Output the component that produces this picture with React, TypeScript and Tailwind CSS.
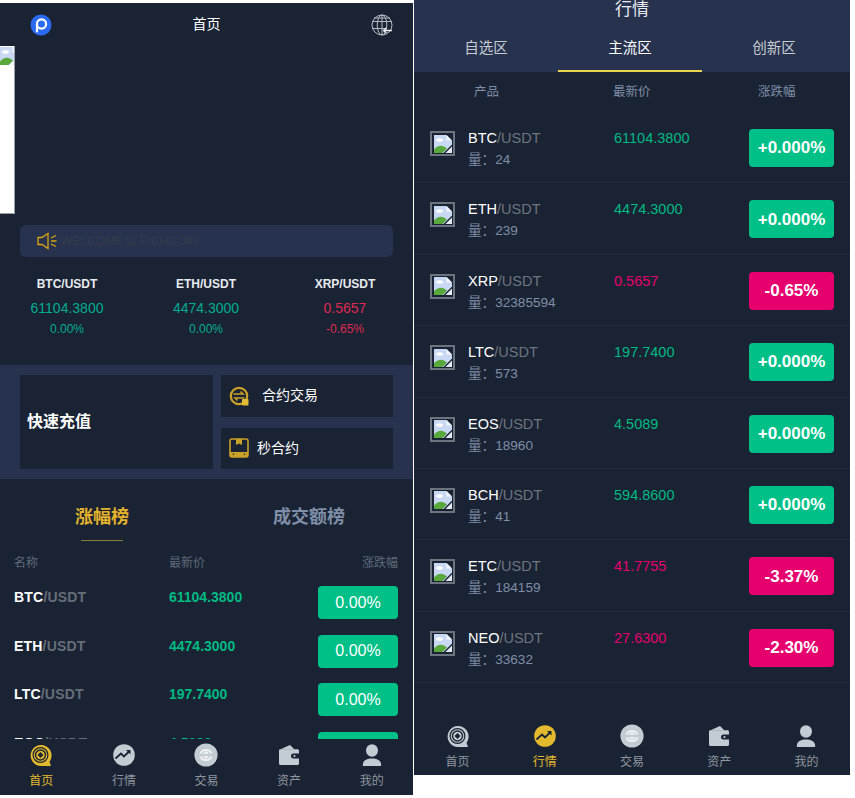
import React from 'react';

const FONT = "font-['Liberation_Sans','Noto_Sans_CJK_SC',sans-serif]";

const BrokenImage: React.FC = () => (
  <svg width="18" height="18" viewBox="0 0 18 18" className="shrink-0">
    <path d="M0 0H12.5L18 5.5V9.5L9.5 18H0Z" fill="#c9d8f3" />
    <path d="M12.5 0V5.5H18Z" fill="#f4f6fa" />
    <ellipse cx="5.5" cy="5" rx="3.4" ry="1.8" fill="#fff" />
    <path d="M0 18V14.5C3 10.5 7 10 10 11.5L13 13.5L8.5 18Z" fill="#58a83c" />
    <path d="M18 11.5V18H11.5Z" fill="#e6ebf3" />
  </svg>
);

const Logo: React.FC = () => (
  <svg width="22" height="22" viewBox="0 0 22 22">
    <circle cx="11" cy="11" r="10.5" fill="#2a6af0" />
    <circle cx="11.5" cy="10" r="4.6" fill="none" stroke="#fff" strokeWidth="2.2" />
    <path d="M7 10V17.5" stroke="#fff" strokeWidth="2.2" strokeLinecap="round" />
  </svg>
);

const Globe: React.FC = () => (
  <svg width="22" height="22" viewBox="0 0 22 22" fill="none" stroke="#b5bac2" strokeWidth="1">
    <circle cx="11" cy="11" r="10" />
    <ellipse cx="11" cy="11" rx="4.8" ry="10" />
    <path d="M11 1V21M1.6 7.5H20.4M1.6 14.5H14M3 4H19" />
    <path d="M21 16.5H12.5M15.5 13.8L12.5 16.5L15.5 19.2" stroke="#e6e8eb" strokeWidth="1.3" />
  </svg>
);

const Speaker: React.FC = () => (
  <svg width="20" height="18" viewBox="0 0 20 18" fill="none" stroke="#d9a514" strokeWidth="1.3">
    <path d="M1 5.5H5L11 1.5V16.5L5 12.5H1Z" />
    <path d="M14 6L19 3.5M14 9H19.5M14 12L19 14.5" />
  </svg>
);

const SwapIcon: React.FC = () => (
  <svg width="20" height="20" viewBox="0 0 20 20" fill="none">
    <circle cx="10" cy="10" r="8.2" stroke="#c9a227" strokeWidth="2.2" />
    <path d="M4.5 8H14L11.5 5.5M15.5 12H6L8.5 14.5" stroke="#c9a227" strokeWidth="1.6" />
    <rect x="13" y="13" width="6.5" height="6.5" rx="1" fill="#e3bc35" />
  </svg>
);

const BoxIcon: React.FC = () => (
  <svg width="20" height="20" viewBox="0 0 20 20" fill="none">
    <rect x="1" y="1" width="18" height="18" rx="2" stroke="#c9a227" strokeWidth="1.6" />
    <path d="M7 1H13V7L10 5.5L7 7Z" fill="#c9a227" />
    <rect x="1" y="14" width="18" height="5" fill="#c9a227" />
    <circle cx="4.5" cy="16.3" r="0.8" fill="#1a2334" />
    <circle cx="15.5" cy="16.3" r="0.8" fill="#1a2334" />
  </svg>
);

const HomeIcon: React.FC<{ color: string }> = ({ color }) => (
  <svg width="22" height="23" viewBox="0 0 22 23" fill="none">
    <path d="M21 22H11A10.5 10.5 0 1 1 19.5 17.8Z" fill={color} />
    <circle cx="10.5" cy="11" r="7.4" stroke="#1a2334" strokeWidth="1.2" />
    <circle cx="10.5" cy="11" r="5" stroke="#1a2334" strokeWidth="1.4" />
    <path d="M10.5 8L13.5 11L10.5 14L7.5 11Z" fill="#1a2334" />
  </svg>
);

const MarketIcon: React.FC<{ color: string }> = ({ color }) => (
  <svg width="22" height="22" viewBox="0 0 22 22" fill="none">
    <circle cx="11" cy="11" r="10.8" fill={color} />
    <path d="M2.5 14.5L8 9.5L11 12.5L16.5 7" stroke="#1a2334" strokeWidth="1.8" />
    <path d="M13 6H17.5V10.5Z" fill="#1a2334" />
  </svg>
);

const TradeIcon: React.FC<{ color: string }> = ({ color }) => (
  <svg width="24" height="24" viewBox="0 0 24 24" fill="none">
    <circle cx="12" cy="12" r="11.6" fill={color} />
    <path d="M6.5 10.5A6 6 0 0 1 17.5 10.5M17.5 13.5A6 6 0 0 1 6.5 13.5" stroke="#eef0f2" strokeWidth="2" />
    <path d="M8.5 11H15.5L12 8ZM8.5 13H15.5L12 16Z" fill="#eef0f2" />
  </svg>
);

const WalletIcon: React.FC<{ color: string }> = ({ color }) => (
  <svg width="22" height="22" viewBox="0 0 22 22">
    <path d="M2 5.5L12 1L16.5 5.5Z" fill={color} />
    <path d="M1 6.5C1 5.8 1.6 5.2 2.3 5.2H19.5C20.3 5.2 21 5.9 21 6.7V9.5H15.5A2.5 2.5 0 0 0 15.5 14.5H21V19.5C21 20.3 20.3 21 19.5 21H2.5C1.7 21 1 20.3 1 19.5Z" fill={color} />
    <circle cx="16.5" cy="12" r="1.1" fill={color} />
  </svg>
);

const UserIcon: React.FC<{ color: string }> = ({ color }) => (
  <svg width="20" height="23" viewBox="0 0 20 23">
    <ellipse cx="10" cy="6.5" rx="6" ry="6.2" fill={color} />
    <path d="M1.5 22C0.5 22 0.8 20.5 1 19.5C1.8 16.3 5 14.5 10 14.5C15 14.5 18.2 16.3 19 19.5C19.2 20.5 19.5 22 18.5 22Z" fill={color} />
  </svg>
);

const NAV_GRAY = '#c3cbd3';
const NAV_GOLD = '#e3b92d';

const BottomNav: React.FC<{ active: number; className: string }> = ({ active, className }) => {
  const items = [
    { label: '首页', Icon: HomeIcon },
    { label: '行情', Icon: MarketIcon },
    { label: '交易', Icon: TradeIcon },
    { label: '资产', Icon: WalletIcon },
    { label: '我的', Icon: UserIcon },
  ];
  return (
    <div className={`flex bg-[#1a2334] ${className}`}>
      {items.map((item, i) => (
        <div key={i} className="flex-1 flex flex-col items-center">
          <div className="h-[24px] flex items-center justify-center">
            <item.Icon color={i === active ? NAV_GOLD : NAV_GRAY} />
          </div>
          <div className={`mt-[5px] text-[12px] leading-[18px] ${i === active ? 'text-[#e3b92d]' : 'text-[#8f959e]'}`}>
            {item.label}
          </div>
        </div>
      ))}
    </div>
  );
};

const tickers = [
  { name: 'BTC/USDT', price: '61104.3800', pct: '0.00%', up: true },
  { name: 'ETH/USDT', price: '4474.3000', pct: '0.00%', up: true },
  { name: 'XRP/USDT', price: '0.5657', pct: '-0.65%', up: false },
];

const rankRows = [
  { base: 'BTC', price: '61104.3800' },
  { base: 'ETH', price: '4474.3000' },
  { base: 'LTC', price: '197.7400' },
  { base: 'EOS', price: '4.5089' },
];

const marketRows = [
  { base: 'BTC', vol: '24', price: '61104.3800', pct: '+0.000%', up: true },
  { base: 'ETH', vol: '239', price: '4474.3000', pct: '+0.000%', up: true },
  { base: 'XRP', vol: '32385594', price: '0.5657', pct: '-0.65%', up: false },
  { base: 'LTC', vol: '573', price: '197.7400', pct: '+0.000%', up: true },
  { base: 'EOS', vol: '18960', price: '4.5089', pct: '+0.000%', up: true },
  { base: 'BCH', vol: '41', price: '594.8600', pct: '+0.000%', up: true },
  { base: 'ETC', vol: '184159', price: '41.7755', pct: '-3.37%', up: false },
  { base: 'NEO', vol: '33632', price: '27.6300', pct: '-2.30%', up: false },
];

const HomePanel: React.FC = () => (
  <div className="w-[413px] h-[792px] mt-[3px] bg-[#1a2334] shrink-0 flex flex-col overflow-hidden">
    <header className="h-[43px] shrink-0 grid grid-cols-[1fr_auto_1fr] items-center px-[20px]">
      <div className="pl-[10px]">
        <Logo />
      </div>
      <span className="text-[14px] text-white">首页</span>
      <div className="flex justify-end">
        <Globe />
      </div>
    </header>

    <div className="h-[168px] w-[15px] shrink-0 bg-white overflow-hidden border-b border-r border-[#9aa0a8] pt-px">
      <BrokenImage />
    </div>

    <div className="mt-[11px] mx-[20px] h-[32px] shrink-0 bg-[#27324f] rounded-md flex items-center pl-[17px]">
      <Speaker />
      <span className="ml-[4px] text-[12px] text-[#343b4b]">WELCOME to PICHCOIN</span>
    </div>

    <div className="mt-[19px] h-[89px] shrink-0 flex justify-between pl-[21px] pr-[22px]">
      {tickers.map((t) => (
        <div key={t.name} className="w-[92px] text-center">
          <div className="text-[12px] leading-[16px] font-bold text-[#e8eaee]">{t.name}</div>
          <div className={`mt-[7px] text-[14px] leading-[18px] ${t.up ? 'text-[#03ad8f]' : 'text-[#df2a4f]'}`}>{t.price}</div>
          <div className={`mt-[3px] text-[12px] leading-[18px] ${t.up ? 'text-[#03ad8f]' : 'text-[#df2a4f]'}`}>{t.pct}</div>
        </div>
      ))}
    </div>

    <div className="h-[114px] shrink-0 bg-[#27324f] py-[10px] px-[20px] flex gap-[8px]">
      <div className="w-[193px] bg-[#1a2334] flex items-center pl-[7px] text-[16px] font-bold text-white">快速充值</div>
      <div className="flex-1 flex flex-col gap-[11px]">
        <div className="flex-1 bg-[#1a2334] flex items-center pl-[8px] text-[14px] text-white">
          <SwapIcon />
          <span className="ml-[13px]">合约交易</span>
        </div>
        <div className="flex-1 bg-[#1a2334] flex items-center pl-[8px] text-[14px] text-white">
          <BoxIcon />
          <span className="ml-[8px]">秒合约</span>
        </div>
      </div>
    </div>

    <div className="mt-[25px] flex shrink-0 text-[18px] leading-[26px] font-bold">
      <div className="ml-[75px] w-[54px] flex flex-col items-center text-[#e5b32b]">
        涨幅榜
        <div className="mt-[10px] w-[42px] h-px bg-[#8a7a35]" />
      </div>
      <div className="ml-[144px] text-[#7e8ea6]">成交额榜</div>
    </div>

    <div className="mt-[14px] shrink-0 px-[14px] grid grid-cols-[155px_1fr_auto] text-[12px] leading-[16px] text-[#5f6a7a]">
      <span>名称</span>
      <span>最新价</span>
      <span className="pr-px">涨跌幅</span>
    </div>

    <div className="flex-1 min-h-0 overflow-hidden px-[14px] pt-[15px]">
      {rankRows.map((r) => (
        <div key={r.base} className="h-[48.7px] grid grid-cols-[155px_1fr_auto] text-[14px] font-bold">
          <div className="leading-[23px] tracking-[0.2px]">
            <span className="text-white">{r.base}</span>
            <span className="text-[#666d78]">/USDT</span>
          </div>
          <div className="leading-[23px] text-[#00b983]">{r.price}</div>
          <div className="mr-px w-[80px] h-[33px] bg-[#00c087] rounded-sm flex items-center justify-center text-[16px] font-normal text-white">0.00%</div>
        </div>
      ))}
    </div>

    <BottomNav active={0} className="h-[56px] shrink-0 pt-[4px]" />
  </div>
);

const MarketPanel: React.FC = () => (
  <div className="ml-px w-[436px] h-[775px] bg-[#1a2334] shrink-0 flex flex-col overflow-hidden">
    <div className="h-[72px] shrink-0 bg-[#27324f]">
      <div className="h-[18px] text-center text-[17px] leading-[19px] text-[#e8eaee]">行情</div>
      <div className="mt-[19px] grid grid-cols-[144px_144px_144px] text-center text-[14.5px] leading-[22px] text-[#c8ccd2]">
        <div>自选区</div>
        <div className="h-[35px] border-b-2 border-[#e8d44d] text-white">主流区</div>
        <div>创新区</div>
      </div>
    </div>

    <div className="h-[40px] shrink-0 pt-px grid grid-cols-[199px_145px_1fr] items-center text-[12.5px] text-[#7e8ea6]">
      <span className="pl-[60px]">产品</span>
      <span>最新价</span>
      <span>涨跌幅</span>
    </div>

    <div className="shrink-0">
      {marketRows.map((r) => (
        <div key={r.base} className="h-[71.4px] border-b border-[#222c40] flex px-[16px] pt-[16px]">
          <div className="w-[25px] h-[25px] mt-[3px] border-2 border-[#6c7480] flex items-center justify-center shrink-0">
            <BrokenImage />
          </div>
          <div className="ml-[13px] w-[146px] shrink-0">
            <div className="text-[14.5px] leading-[20px]">
              <span className="text-white">{r.base}</span>
              <span className="text-[#6e747e]">/USDT</span>
            </div>
            <div className="mt-[2px] text-[13.6px] leading-[20px] text-[#7e8ea6]">量：{r.vol}</div>
          </div>
          <div className={`w-[135px] shrink-0 text-[14.5px] leading-[20px] ${r.up ? 'text-[#00b983]' : 'text-[#e6006e]'}`}>{r.price}</div>
          <div className={`mt-px w-[85px] h-[38px] rounded-sm flex items-center justify-center text-[17px] font-bold text-white ${r.up ? 'bg-[#00c087]' : 'bg-[#e6006e]'}`}>{r.pct}</div>
        </div>
      ))}
    </div>

    <BottomNav active={1} className="mt-[41px] h-[50px]" />
  </div>
);

const App: React.FC = () => (
  <div className={`w-[855px] h-[798px] bg-white flex items-start overflow-hidden ${FONT}`}>
    <HomePanel />
    <MarketPanel />
  </div>
);

export default App;
